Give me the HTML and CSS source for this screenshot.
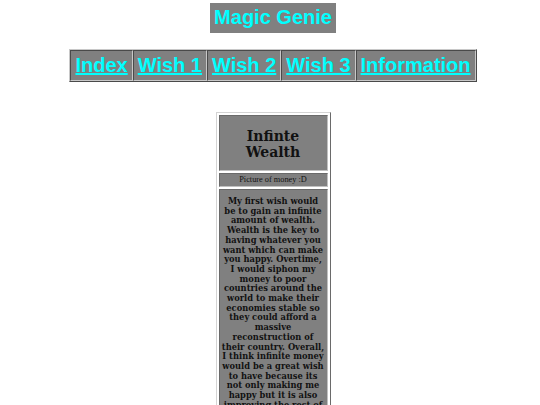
FILE: index.html
```html
<!DOCTYPE html>
<html>
<head>
<meta charset="utf-8">
<title>Magic Genie</title>
<link rel="stylesheet" href="styles.css">
</head>
<body>
<div class="title-wrap"><h1 class="title">Magic Genie</h1></div>
<table class="nav">
<tr>
<td><a href="#">Index</a></td>
<td><a href="#">Wish 1</a></td>
<td><a href="#">Wish 2</a></td>
<td><a href="#">Wish 3</a></td>
<td><a href="#">Information</a></td>
</tr>
</table>
<table class="card">
<tr><td class="head"><h2>Infinte Wealth</h2></td></tr>
<tr><td class="pic"><span>Picture of money :D</span></td></tr>
<tr><td class="text"><p>My first wish would be to gain an infinite amount of wealth. Wealth is the key to having whatever you want which can make you happy. Overtime, I would siphon my money to poor countries around the world to make their economies stable so they could afford a massive reconstruction of their country. Overall, I think infinite money would be a great wish to have because its not only making me happy but it is also improving the rest of the world.</p></td></tr>
</table>
</body>
</html>
```
FILE: styles.css
```css
body {
  margin: 0;
  padding: 3px 0 0 6px;
  font-family: "DejaVu Serif", serif;
  background: #ffffff;
}
.title-wrap {
  text-align: center;
}
.title {
  display: inline-block;
  margin: 0;
  padding: 3px 4px 4px;
  background: #808080;
  color: #00ffff;
  font: bold 20px/23px "Liberation Sans", Arial, sans-serif;
}
.nav {
  margin: 16px auto 0;
  border-collapse: separate;
  border-spacing: 0;
  border: 1px solid;
  border-color: #c8c8c8 #4a4a4a #4a4a4a #c8c8c8;
}
.nav td {
  background: #808080;
  padding: 3px 4px;
  border: 1px solid;
  border-color: #4a4a4a #c8c8c8 #c8c8c8 #4a4a4a;
  font: bold 20px/23px "Liberation Sans", Arial, sans-serif;
}
.nav a {
  color: #00ffff;
}
.card {
  margin: 30px auto 0;
  width: 115px;
  border-collapse: separate;
  border-spacing: 2px;
  border: 1px solid;
  border-color: #d4d4d4 #6a6a6a #6a6a6a #d4d4d4;
}
.card td {
  background: #808080;
  border: 1px solid;
  border-color: #6a6a6a #c0c0c0 #c0c0c0 #6a6a6a;
  text-align: center;
  color: #111111;
  padding: 1px 0;
}
.head h2 {
  margin: 11px 0 9px;
  font-size: 14px;
  font-weight: bold;
}
.pic {
  font-family: "Liberation Serif", "Times New Roman", serif;
  font-size: 8.3px;
  line-height: 10px;
}
.card td.text {
  padding: 1px 2px;
}
.text p {
  margin: 6px 0;
  font-family: "DejaVu Serif", serif;
  font-size: 8.3px;
  line-height: 9.7px;
  font-weight: bold;
}
```
